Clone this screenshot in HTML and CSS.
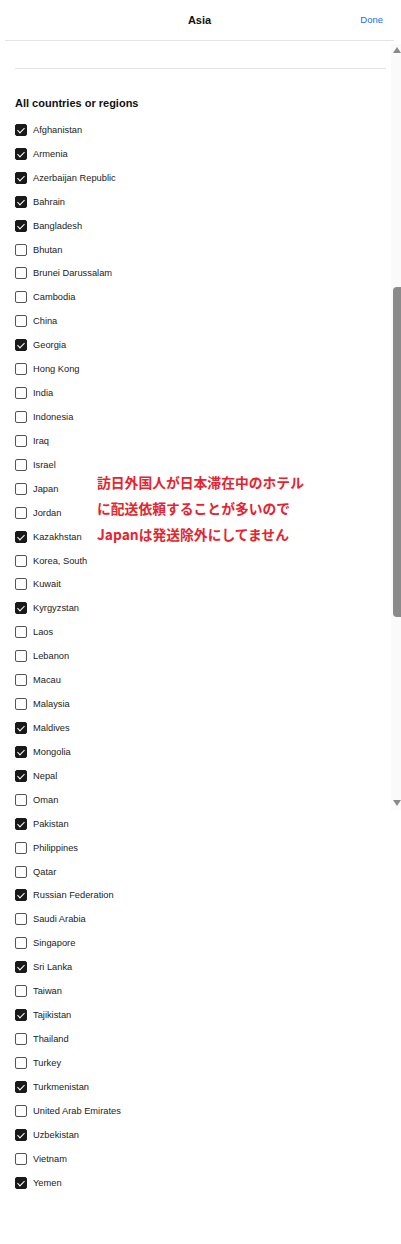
FILE: index.html
```html
<!DOCTYPE html>
<html lang="en">
<head>
    <meta charset="UTF-8">
    <title>Asia</title>
    <link rel="stylesheet" href="styles.css">
</head>
<body>
    <div class="sheet">
        <div class="sheet-header">
            <span class="sheet-title">Asia</span>
            <span class="done-btn">Done</span>
        </div>

        <div class="sheet-body">
            <div class="divider"></div>
            <h2 class="group-title">All countries or regions</h2>
            <ul class="country-list" id="countryList"></ul>
        </div>

        <div class="scrollbar">
            <div class="arrow up"></div>
            <div class="thumb"></div>
            <div class="arrow down"></div>
        </div>

        <div class="note">
            訪日外国人が日本滞在中のホテル<br>
            に配送依頼することが多いので<br>
            Japanは発送除外にしてません
        </div>
    </div>

    <script>
        const countries = [
            ['Afghanistan', true], ['Armenia', true], ['Azerbaijan Republic', true],
            ['Bahrain', true], ['Bangladesh', true], ['Bhutan', false],
            ['Brunei Darussalam', false], ['Cambodia', false], ['China', false],
            ['Georgia', true], ['Hong Kong', false], ['India', false],
            ['Indonesia', false], ['Iraq', false], ['Israel', false],
            ['Japan', false], ['Jordan', false], ['Kazakhstan', true],
            ['Korea, South', false], ['Kuwait', false], ['Kyrgyzstan', true],
            ['Laos', false], ['Lebanon', false], ['Macau', false],
            ['Malaysia', false], ['Maldives', true], ['Mongolia', true],
            ['Nepal', true], ['Oman', false], ['Pakistan', true],
            ['Philippines', false], ['Qatar', false], ['Russian Federation', true],
            ['Saudi Arabia', false], ['Singapore', false], ['Sri Lanka', true],
            ['Taiwan', false], ['Tajikistan', true], ['Thailand', false],
            ['Turkey', false], ['Turkmenistan', true], ['United Arab Emirates', false],
            ['Uzbekistan', true], ['Vietnam', false], ['Yemen', true]
        ];

        const list = document.getElementById('countryList');
        countries.forEach(([name, checked]) => {
            const li = document.createElement('li');
            li.className = 'country';
            li.innerHTML = `<span class="box${checked ? ' checked' : ''}"></span><span class="name">${name}</span>`;
            list.appendChild(li);
        });
    </script>
</body>
</html>
```

FILE: styles.css
```css
body {
    margin: 0;
    background: #fff;
    font-family: "Liberation Sans", Arial, sans-serif;
    color: #222;
}

.sheet {
    position: relative;
    width: 401px;
    min-height: 1244px;
}

.sheet-header {
    height: 40px;
    margin: 0 7px 0 5px;
    border-bottom: 1px solid #e4e4e4;
    display: flex;
    align-items: center;
    justify-content: center;
    position: relative;
}

.sheet-title {
    font-size: 11px;
    font-weight: bold;
    color: #111;
}

.done-btn {
    position: absolute;
    right: 11px;
    top: 14px;
    font-size: 9.5px;
    color: #1a6cf0;
}

.sheet-body {
    padding: 0 15px;
}

.divider {
    margin-top: 27px;
    height: 1px;
    background: #e4e4e4;
}

.group-title {
    margin: 27px 0 8px;
    font-size: 11px;
    line-height: 14px;
    font-weight: bold;
    color: #111;
}

.country-list {
    list-style: none;
    margin: 0;
    padding: 0;
}

.country {
    height: 23.93px;
    display: flex;
    align-items: center;
    gap: 6px;
    font-size: 9.3px;
    color: #222;
}

.box {
    width: 10px;
    height: 10px;
    border: 1px solid #555;
    border-radius: 2px;
    position: relative;
    flex-shrink: 0;
}

.box.checked {
    background: #191919;
    border-color: #191919;
}

.box.checked::after {
    content: "";
    position: absolute;
    left: 3px;
    top: 1px;
    width: 3px;
    height: 6px;
    border-right: 1.6px solid #fff;
    border-bottom: 1.6px solid #fff;
    transform: rotate(45deg);
}

.scrollbar {
    position: absolute;
    top: 44px;
    right: 0;
    width: 10px;
    height: 766px;
    background: #fafafa;
    display: flex;
    flex-direction: column;
    align-items: flex-end;
}

.arrow {
    width: 0;
    height: 0;
    margin: 3px 0 0 0;
    border-left: 4px solid transparent;
    border-right: 4px solid transparent;
}

.arrow.up {
    border-bottom: 6px solid #8a8a8a;
}

.arrow.down {
    margin-top: auto;
    margin-bottom: 4px;
    border-top: 6px solid #8a8a8a;
}

.thumb {
    width: 8px;
    height: 330px;
    margin-top: 234px;
    background: #8a8a8a;
    border-radius: 4px 0 0 4px;
}

.note {
    position: absolute;
    left: 97px;
    top: 469px;
    font-family: "Noto Sans CJK JP", sans-serif;
    font-size: 13.8px;
    font-weight: bold;
    line-height: 26px;
    color: #e6232e;
}
```
